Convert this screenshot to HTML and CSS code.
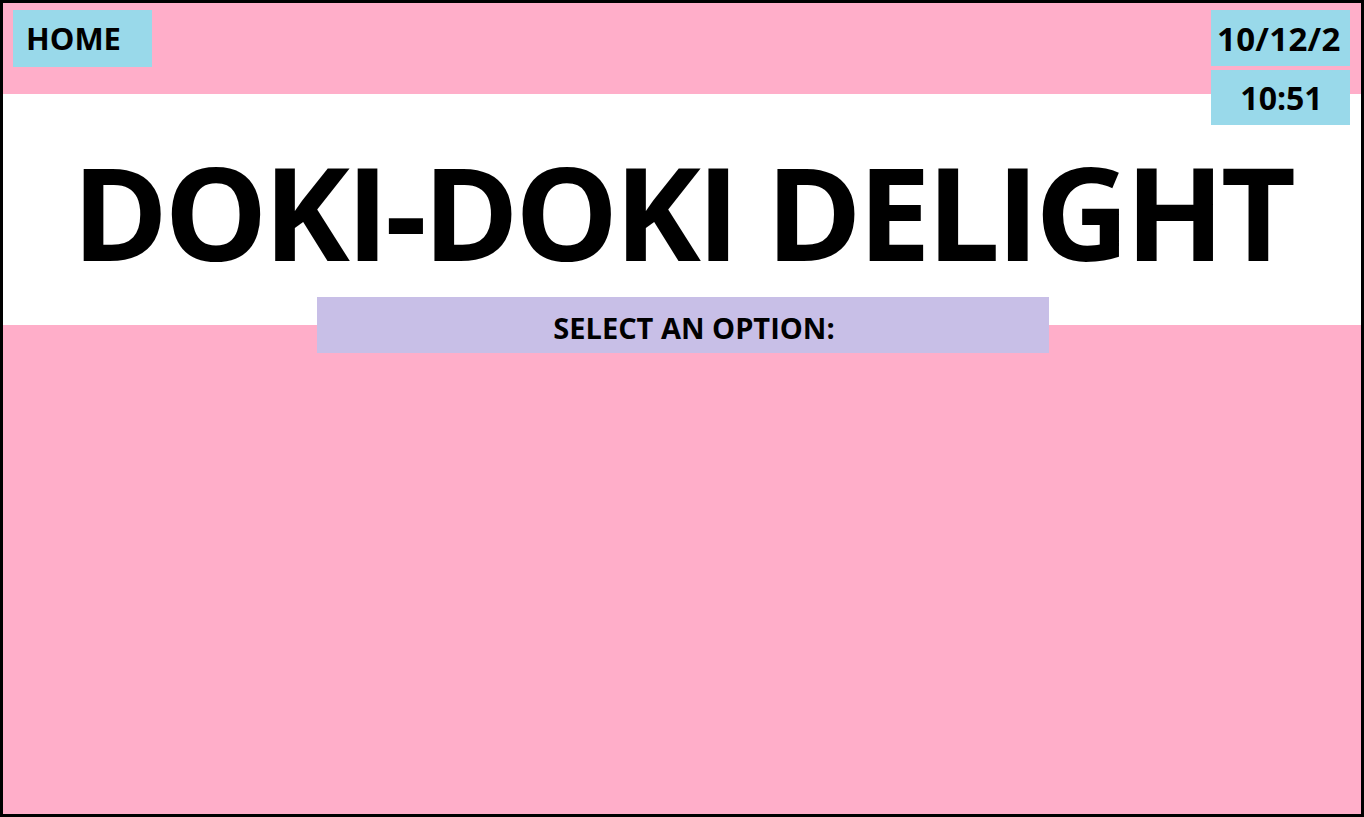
FILE: index.html
```html
<!DOCTYPE html>
<html>
<head>
<meta charset="utf-8">
<link rel="stylesheet" href="styles.css">
</head>
<body>
<div class="frame">
  <header class="topbar">
    <div class="home-btn">HOME</div>
    <div class="clock">
      <div class="clock-box date">10/12/2</div>
      <div class="clock-box time">10:51</div>
    </div>
  </header>
  <section class="banner">
    <h1 class="title">DOKI-DOKI DELIGHT</h1>
  </section>
  <main class="content">
    <div class="select-box">SELECT AN OPTION:</div>
  </main>
</div>
</body>
</html>
```

FILE: styles.css
```css
html, body {
  margin: 0;
  padding: 0;
}
body {
  font-family: "Open Sans", "Liberation Sans", sans-serif;
  font-weight: 700;
  color: #000;
  background: #fff;
}
.frame {
  box-sizing: border-box;
  width: 1364px;
  height: 817px;
  border: 3px solid #000;
  background: #ffaec9;
  display: flex;
  flex-direction: column;
  overflow: hidden;
}
.topbar {
  height: 91px;
  flex: none;
  display: flex;
  justify-content: space-between;
  align-items: flex-start;
  padding: 7px 11px 0 10px;
  box-sizing: border-box;
}
.home-btn {
  width: 139px;
  height: 57px;
  background: #99d9ea;
  box-sizing: border-box;
  padding-left: 13px;
  display: flex;
  align-items: center;
  font-size: 31px;
  line-height: 1;
}
.clock {
  position: relative;
  z-index: 2;
  display: flex;
  flex-direction: column;
  gap: 4px;
}
.clock-box {
  width: 139px;
  height: 56px;
  background: #99d9ea;
  box-sizing: border-box;
  display: flex;
  align-items: center;
  font-size: 32px;
  line-height: 1;
  white-space: nowrap;
  overflow: hidden;
}
.date {
  padding-left: 6px;
  font-size: 33px;
  letter-spacing: 0.3px;
}
.time {
  justify-content: center;
  height: 55px;
  padding-left: 2px;
}
.banner {
  height: 231px;
  flex: none;
  background: #fff;
  display: flex;
  justify-content: center;
  align-items: flex-start;
}
.title {
  margin: 52px 0 0 0;
  font-size: 130px;
  line-height: 1;
  letter-spacing: -4px;
  font-weight: 700;
  white-space: nowrap;
}
.content {
  flex: 1;
  display: flex;
  justify-content: center;
  align-items: flex-start;
}
.select-box {
  margin: -28px 0 0 2px;
  width: 732px;
  height: 56px;
  background: #c8bfe7;
  box-sizing: border-box;
  padding: 4px 0 0 22px;
  display: flex;
  justify-content: center;
  align-items: center;
  font-size: 29px;
  line-height: 1;
}
```
